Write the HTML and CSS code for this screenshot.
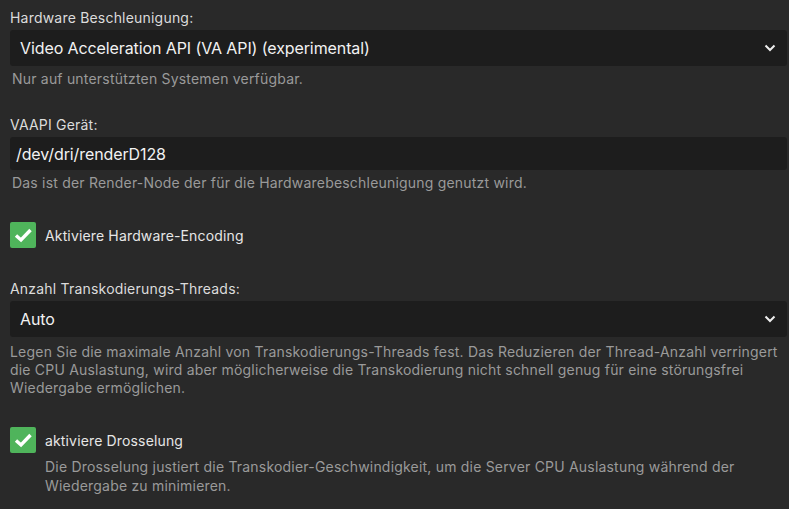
FILE: index.html
```html
<!DOCTYPE html>
<html lang="de">
<head>
  <meta charset="UTF-8" />
  <meta name="viewport" content="width=device-width, initial-scale=1.0"/>
  <title>Transkodierung</title>
  <link rel="stylesheet" href="styles.css">
</head>
<body>

<div class="settings">
  <div class="field">
    <label class="label">Hardware Beschleunigung:</label>
    <div class="select">
      <span>Video Acceleration API (VA API) (experimental)</span>
      <svg class="chevron" width="12" height="8" viewBox="0 0 12 8"><path d="M1.5 1.5 L6 6 L10.5 1.5" fill="none" stroke="#eee" stroke-width="2"/></svg>
    </div>
    <div class="help">Nur auf unterstützten Systemen verfügbar.</div>
  </div>

  <div class="field">
    <label class="label">VAAPI Gerät:</label>
    <div class="input">/dev/dri/renderD128</div>
    <div class="help">Das ist der Render-Node der für die Hardwarebeschleunigung genutzt wird.</div>
  </div>

  <div class="check first">
    <span class="box"><svg width="26" height="26" viewBox="0 0 26 26"><path d="M6 13.5 L11 18 L20.5 8" fill="none" stroke="#fff" stroke-width="3.4"/></svg></span>
    <span class="check-text">Aktiviere Hardware-Encoding</span>
  </div>

  <div class="field threads">
    <label class="label">Anzahl Transkodierungs-Threads:</label>
    <div class="select">
      <span>Auto</span>
      <svg class="chevron" width="12" height="8" viewBox="0 0 12 8"><path d="M1.5 1.5 L6 6 L10.5 1.5" fill="none" stroke="#eee" stroke-width="2"/></svg>
    </div>
    <div class="help multi">Legen Sie die maximale Anzahl von Transkodierungs-Threads fest. Das Reduzieren der Thread-Anzahl verringert die CPU Auslastung, wird aber möglicherweise die Transkodierung nicht schnell genug für eine störungsfrei Wiedergabe ermöglichen.</div>
  </div>

  <div class="check last">
    <span class="box"><svg width="26" height="26" viewBox="0 0 26 26"><path d="M6 13.5 L11 18 L20.5 8" fill="none" stroke="#fff" stroke-width="3.4"/></svg></span>
    <span class="check-text">aktiviere Drosselung</span>
  </div>
  <div class="help check-help">Die Drosselung justiert die Transkodier-Geschwindigkeit, um die Server CPU Auslastung während der Wiedergabe zu minimieren.</div>
</div>

</body>
</html>
```

FILE: styles.css
```css
body {
  margin: 0;
  background: #292929;
  font-family: Inter, "Noto Sans", sans-serif;
  color: #e6e6e6;
}
.settings { padding: 8px 2px 0 10px; }
.field { margin-bottom: 27px; }
.label {
  display: block;
  font-size: 14px;
  line-height: 20px;
  letter-spacing: 0.2px;
  color: #dcdcdc;
  margin-bottom: 2px;
}
.select, .input {
  display: flex;
  align-items: center;
  justify-content: space-between;
  background: #1d1d1d;
  border-radius: 3px;
  height: 36px;
  padding: 0 10px;
  font-size: 16px;
  letter-spacing: -0.1px;
  color: #f2f2f2;
}
.input { height: 33px; padding: 0 6px; }
.chevron { margin-right: 1px; }
.help {
  font-size: 14px;
  line-height: 18px;
  letter-spacing: 0.2px;
  color: #9a9a9a;
  margin-top: 4px;
  padding-left: 2px;
}
.help.multi { margin-top: 6px; padding-left: 0; }
.check {
  display: flex;
  align-items: center;
  gap: 9px;
  font-size: 14px;
  letter-spacing: 0.15px;
  color: #e6e6e6;
}
.check.first { margin-top: 30px; margin-bottom: 31px; }
.threads { margin-bottom: 30px; }
.box {
  width: 26px;
  height: 26px;
  background: #4fb45b;
  border-radius: 2px;
  display: block;
}
.box svg { display: block; }
.check-help {
  padding-left: 35px;
  line-height: 19px;
  margin-top: 4px;
}
```
